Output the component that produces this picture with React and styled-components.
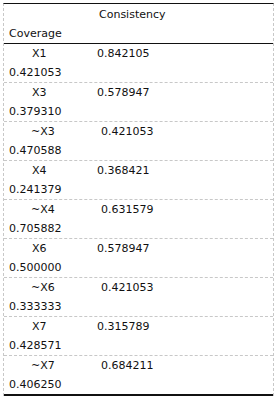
import React from "react";
import styled, { createGlobalStyle } from "styled-components";

const Global = createGlobalStyle`
  html, body { margin: 0; padding: 0; background: #fff; }
  body { font-family: "DejaVu Sans", "Liberation Sans", sans-serif; font-size: 11px; color: #111; }
`;

const Page = styled.div`
  padding: 3px;
`;

const Table = styled.div`
  width: 271px;
  box-sizing: border-box;
  border-left: 1px dashed #c8c8c8;
  border-right: 1px dashed #c8c8c8;
  border-top: 1px solid #111;
`;

const Header = styled.div`
  padding: 1px 5px 0;
  border-bottom: 1px solid #111;
`;

const Row = styled.div`
  padding: 0 5px;
  border-bottom: ${(p) => (p.$last ? "2px solid #111" : "1px dashed #c8c8c8")};
`;

const Line = styled.div`
  display: flex;
  height: 19px;
  line-height: 19px;
  white-space: nowrap;
`;

const LabelCell = styled.span`
  box-sizing: border-box;
  width: ${(p) => p.$w}px;
  padding-left: ${(p) => p.$pad}px;
  flex: none;
`;

const ValueCell = styled.span`
  flex: none;
`;

const rows = [
  ["X1", "0.842105", "0.421053"],
  ["X3", "0.578947", "0.379310"],
  ["~X3", "0.421053", "0.470588"],
  ["X4", "0.368421", "0.241379"],
  ["~X4", "0.631579", "0.705882"],
  ["X6", "0.578947", "0.500000"],
  ["~X6", "0.421053", "0.333333"],
  ["X7", "0.315789", "0.428571"],
  ["~X7", "0.684211", "0.406250"],
];

export default function App() {
  return (
    <Page>
      <Global />
      <Table>
        <Header>
          <Line>
            <LabelCell $w={90} $pad={0} />
            <ValueCell>Consistency</ValueCell>
          </Line>
          <Line>
            <ValueCell>Coverage</ValueCell>
          </Line>
        </Header>
        {rows.map(([label, cons, cov], i) => {
          const neg = label.startsWith("~");
          return (
            <Row key={label} $last={i === rows.length - 1}>
              <Line>
                <LabelCell $w={neg ? 92 : 88} $pad={neg ? 22 : 23}>
                  {label}
                </LabelCell>
                <ValueCell>{cons}</ValueCell>
              </Line>
              <Line>
                <ValueCell>{cov}</ValueCell>
              </Line>
            </Row>
          );
        })}
      </Table>
    </Page>
  );
}
